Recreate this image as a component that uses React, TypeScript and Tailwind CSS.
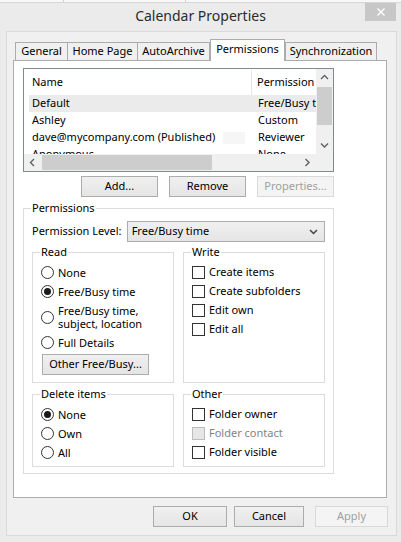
import React from "react"

type Dir = "up" | "down" | "left" | "right"

function Chevron({ dir }: { dir: Dir }) {
  const paths: Record<Dir, string> = {
    up: "M1 5 L4.5 1.5 L8 5",
    down: "M1 1.5 L4.5 5 L8 1.5",
    left: "M5 1 L1.5 4.5 L5 8",
    right: "M1.5 1 L5 4.5 L1.5 8",
  }
  const horiz = dir === "up" || dir === "down"
  return (
    <svg width={horiz ? 9 : 7} height={horiz ? 7 : 9} viewBox={horiz ? "0 0 9 7" : "0 0 7 9"} className="text-[#606060]">
      <path d={paths[dir]} fill="none" stroke="currentColor" strokeWidth="1.4" />
    </svg>
  )
}

function Btn({ label, w, disabled }: { label: string; w: string; disabled?: boolean }) {
  return (
    <div
      className={`${w} h-[21px] shrink-0 flex items-center justify-center border ${
        disabled
          ? "border-[#d9d9d9] bg-[#f4f4f4] text-[#a0a0a0]"
          : "border-[#acacac] bg-gradient-to-b from-[#f0f0f0] to-[#e5e5e5] text-black"
      }`}
    >
      {label}
    </div>
  )
}

function Radio({ checked }: { checked?: boolean }) {
  return (
    <span className="w-[13px] h-[13px] shrink-0 rounded-full border border-[#333] bg-white flex items-center justify-center">
      {checked && <span className="w-[7px] h-[7px] rounded-full bg-[#1a1a1a]" />}
    </span>
  )
}

function Check({ disabled }: { disabled?: boolean }) {
  return (
    <span
      className={`w-[13px] h-[13px] shrink-0 border ${
        disabled ? "border-[#bcbcbc] bg-[#e6e6e6]" : "border-[#333] bg-white"
      }`}
    />
  )
}

function Group({ title, className, children }: { title: string; className?: string; children: React.ReactNode }) {
  return (
    <fieldset className={`border border-[#dcdcdc] px-[8px] min-w-0 ${className ?? ""}`}>
      <legend className="px-[1px] -ml-[1px] leading-[16px]">{title}</legend>
      {children}
    </fieldset>
  )
}

function RadioRow({ label, checked, h = "h-[19px]" }: { label: React.ReactNode; checked?: boolean; h?: string }) {
  return (
    <div className={`${h} flex items-center gap-[4px]`}>
      <Radio checked={checked} />
      <span className="leading-[13px]">{label}</span>
    </div>
  )
}

function CheckRow({ label, disabled }: { label: string; disabled?: boolean }) {
  return (
    <div className="h-[19px] flex items-center gap-[4px]">
      <Check disabled={disabled} />
      <span className={disabled ? "text-[#838383]" : ""}>{label}</span>
    </div>
  )
}

const rows = [
  { name: "Default", perm: "Free/Busy time", selected: true },
  { name: "Ashley", perm: "Custom" },
  { name: "dave@mycompany.com (Published)", perm: "Reviewer", hidden: true },
  { name: "Anonymous", perm: "None" },
]

const tabs = [
  { label: "General", cls: "w-[52px] h-[18px] border-l border-t" },
  { label: "Home Page", cls: "w-[70px] h-[18px] border-l border-t" },
  { label: "AutoArchive", cls: "w-[73px] h-[18px] border-l border-t border-r" },
  { label: "Permissions", cls: "w-[75px] h-[22px] -mb-px border-l border-t border-r bg-white relative z-10", sel: true },
  { label: "Synchronization", cls: "w-[92px] h-[18px] border-l border-t border-r" },
]

export default function App() {
  return (
    <div className="w-[401px] h-[542px] bg-[#ebebeb] text-[11px] text-black font-['Noto_Sans',sans-serif] flex flex-col overflow-hidden">
      {/* strip of the window behind */}
      <div className="h-[3px] flex bg-[#f8f8f8] border-b border-[#d6d6d6]">
        <div className="w-[64px] border-r border-[#d0d0d0]" />
        <div className="w-[122px] border-r border-[#d0d0d0]" />
      </div>

      {/* title bar */}
      <div className="h-[28px] relative flex items-center justify-center pb-[4px]">
        <span className="text-[14px] text-[#2b2b2b]">Calendar Properties</span>
        <div className="absolute right-[5px] top-0 w-[31px] h-[18px] bg-[#c7c7c7] flex items-center justify-center">
          <svg width="8" height="8" viewBox="0 0 8 8">
            <path d="M0.5 0.5 L7.5 7.5 M7.5 0.5 L0.5 7.5" stroke="white" strokeWidth="1.4" />
          </svg>
        </div>
      </div>

      {/* client area */}
      <div className="ml-[6px] w-[391px] h-[505px] border border-[#dadada] bg-[#f0f0f0] flex flex-col">
        <div className="mt-[7px] ml-[8px] h-[21px] flex items-end">
          {tabs.map((t) => (
            <div
              key={t.label}
              className={`${t.cls} border-[#acacac] flex items-center justify-center whitespace-nowrap ${t.sel ? "pb-[2px]" : ""}`}
            >
              {t.label}
            </div>
          ))}
        </div>

        {/* tab panel */}
        <div className="ml-[6px] w-[374px] h-[438px] border border-[#acacac] bg-white pl-[9px] pt-[7px]">
          {/* list view */}
          <div className="w-[311px] h-[104px] border border-[#828790] flex flex-col">
            <div className="h-[85px] flex">
              <div className="w-[292px] overflow-hidden pt-px">
                <div className="h-[25px] flex items-center">
                  <div className="w-[228px] h-full pl-[8px] flex items-center border-r border-[#e5e5e5]">Name</div>
                  <div className="pl-[5px] whitespace-nowrap">Permission</div>
                </div>
                {rows.map((r) => (
                  <div key={r.name} className="h-[17px] pl-[5px] flex">
                    <div className={`flex-1 flex items-center whitespace-nowrap overflow-hidden ${r.selected ? "bg-[#ebebeb]" : ""}`}>
                      <div className="w-[223px] shrink-0 pl-[3px] flex items-center">
                        {r.name}
                        {r.hidden && <span className="ml-[8px] w-[22px] h-[12px] bg-[#f6f6f6]" />}
                      </div>
                      <div className="pl-[6px]">{r.perm}</div>
                    </div>
                  </div>
                ))}
              </div>
              {/* vertical scrollbar */}
              <div className="w-[17px] bg-[#f0f0f0] flex flex-col items-center">
                <div className="h-[17px] flex items-center justify-center">
                  <Chevron dir="up" />
                </div>
                <div className="w-[15px] h-[38px] mt-px bg-[#cdcdcd]" />
                <div className="flex-1" />
                <div className="h-[17px] flex items-center justify-center">
                  <Chevron dir="down" />
                </div>
              </div>
            </div>
            {/* horizontal scrollbar */}
            <div className="h-[17px] flex bg-[#f0f0f0]">
              <div className="w-[17px] flex items-center justify-center">
                <Chevron dir="left" />
              </div>
              <div className="w-[170px] h-[15px] mt-px ml-px bg-[#cdcdcd]" />
              <div className="flex-1" />
              <div className="w-[17px] flex items-center justify-center">
                <Chevron dir="right" />
              </div>
              <div className="w-[17px]" />
            </div>
          </div>

          <div className="w-[311px] mt-[4px] flex justify-end gap-[11px]">
            <Btn label="Add..." w="w-[77px]" />
            <Btn label="Remove" w="w-[77px]" />
            <Btn label="Properties..." w="w-[77px]" disabled />
          </div>

          <Group title="Permissions" className="w-[311px] mt-[3px] pb-[6px]">
            <div className="mt-[5px] h-[21px] flex items-center">
              <span className="w-[95px]">Permission Level:</span>
              <div className="w-[199px] h-[21px] border border-[#acacac] bg-gradient-to-b from-[#f0f0f0] to-[#e5e5e5] flex items-center justify-between pl-[4px] pr-[6px]">
                <span>Free/Busy time</span>
                <svg width="9" height="6" viewBox="0 0 9 6" className="text-[#444]">
                  <path d="M1 1 L4.5 4.5 L8 1" fill="none" stroke="currentColor" strokeWidth="1.5" />
                </svg>
              </div>
            </div>

            <div className="mt-[2px] flex gap-[9px]">
              <Group title="Read" className="w-[142px] pt-[3px] pb-[7px]">
                <RadioRow label="None" />
                <RadioRow label="Free/Busy time" checked />
                <RadioRow
                  h="h-[32px]"
                  label={
                    <>
                      Free/Busy time,
                      <br />
                      subject, location
                    </>
                  }
                />
                <RadioRow label="Full Details" h="h-[18px]" />
                <div className="mt-[3px] ml-[1px]">
                  <Btn label="Other Free/Busy..." w="w-[107px]" />
                </div>
              </Group>
              <Group title="Write" className="w-[142px] pt-[3px]">
                <CheckRow label="Create items" />
                <CheckRow label="Create subfolders" />
                <CheckRow label="Edit own" />
                <CheckRow label="Edit all" />
              </Group>
            </div>

            <div className="mt-[3px] flex gap-[9px]">
              <Group title="Delete items" className="w-[142px] pt-[3px] pb-[4px]">
                <RadioRow label="None" checked />
                <RadioRow label="Own" />
                <RadioRow label="All" />
              </Group>
              <Group title="Other" className="w-[142px] pt-[3px] pb-[4px]">
                <CheckRow label="Folder owner" />
                <CheckRow label="Folder contact" disabled />
                <CheckRow label="Folder visible" />
              </Group>
            </div>
          </Group>
        </div>

        <div className="mt-[8px] pr-[8px] flex justify-end">
          <Btn label="OK" w="w-[74px]" />
          <div className="ml-[7px]">
            <Btn label="Cancel" w="w-[70px]" />
          </div>
          <div className="ml-[11px]">
            <Btn label="Apply" w="w-[73px]" disabled />
          </div>
        </div>
      </div>
    </div>
  )
}
